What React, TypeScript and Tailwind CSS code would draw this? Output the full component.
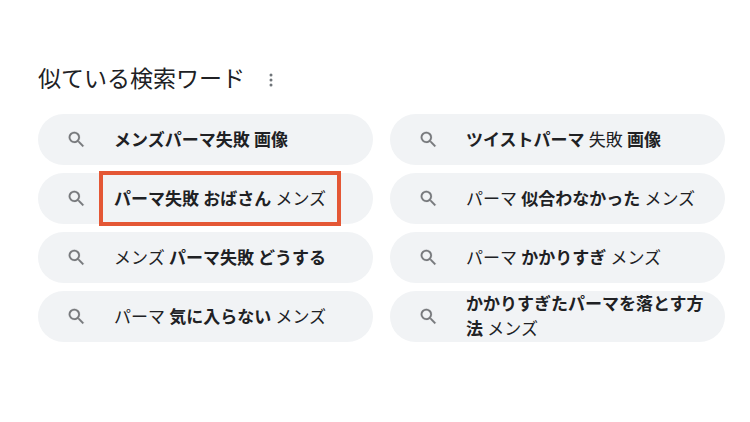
import React from 'react';

type Part = { text: string; bold?: boolean };

type Suggestion = { parts: Part[]; marked?: boolean };

const suggestions: Suggestion[] = [
    { parts: [{ text: 'メンズパーマ失敗 画像', bold: true }] },
    { parts: [{ text: 'ツイストパーマ', bold: true }, { text: ' 失敗 ' }, { text: '画像', bold: true }] },
    { parts: [{ text: 'パーマ失敗 おばさん', bold: true }, { text: ' メンズ' }], marked: true },
    { parts: [{ text: 'パーマ ' }, { text: '似合わなかった', bold: true }, { text: ' メンズ' }] },
    { parts: [{ text: 'メンズ ' }, { text: 'パーマ失敗 どうする', bold: true }] },
    { parts: [{ text: 'パーマ ' }, { text: 'かかりすぎ', bold: true }, { text: ' メンズ' }] },
    { parts: [{ text: 'パーマ ' }, { text: '気に入らない', bold: true }, { text: ' メンズ' }] },
    { parts: [{ text: 'かかりすぎたパーマを落とす方法', bold: true }, { text: ' メンズ' }] },
];

function SearchIcon() {
    return (
        <svg viewBox="0 0 24 24" className="size-[21px] shrink-0 fill-[#77797c] stroke-[#77797c] stroke-[0.2]" aria-hidden="true">
            <path d="M15.5 14h-.79l-.28-.27A6.471 6.471 0 0 0 16 9.5 6.5 6.5 0 1 0 9.5 16c1.61 0 3.09-.59 4.23-1.57l.27.28v.79l5 4.99L20.49 19l-4.99-5zm-6 0C7.01 14 5 11.99 5 9.5S7.01 5 9.5 5 14 7.01 14 9.5 11.99 14 9.5 14z" />
        </svg>
    );
}

function SuggestionLink({ suggestion }: { suggestion: Suggestion }) {
    return (
        <a href="#" className="flex min-h-[51px] items-center gap-[27px] rounded-full bg-[#f1f3f5] pl-7 pr-3">
            <SearchIcon />
            <span className="relative pt-px text-[17px] leading-[25px]">
                {suggestion.parts.map(part =>
                    part.bold ? <b key={part.text}>{part.text}</b> : <span key={part.text}>{part.text}</span>
                )}
                {suggestion.marked && <span className="absolute -inset-x-[15px] -top-[15px] -bottom-[14px] border-4 border-[#e45735]" />}
            </span>
        </a>
    );
}

export default function App() {
    return (
        <main className="min-h-screen bg-white pl-[38px] pr-[25px] pt-[62px] font-['Roboto','Noto_Sans_CJK_JP',sans-serif] text-[#202124]" lang="ja">
            <div className="flex items-center gap-4">
                <h2 className="text-[23px] leading-9">似ている検索ワード</h2>
                <button type="button" aria-label="メニュー">
                    <svg viewBox="0 0 24 24" className="size-5 fill-[#70757a]" aria-hidden="true">
                        <circle cx="12" cy="6" r="1.8" />
                        <circle cx="12" cy="12" r="1.8" />
                        <circle cx="12" cy="18" r="1.8" />
                    </svg>
                </button>
            </div>
            <div className="mt-4 grid grid-cols-2 gap-x-[17px] gap-y-2">
                {suggestions.map((suggestion, index) => (
                    <SuggestionLink key={index} suggestion={suggestion} />
                ))}
            </div>
        </main>
    );
}
